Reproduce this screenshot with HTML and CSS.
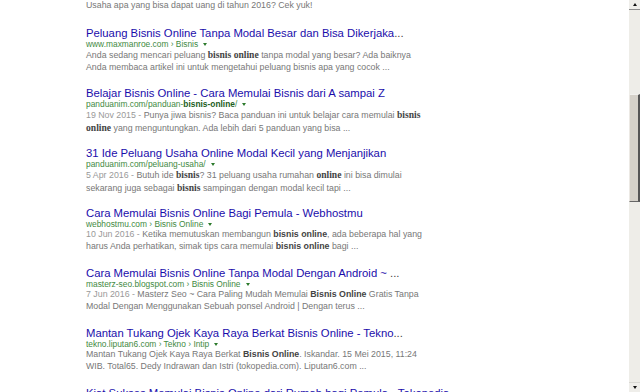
FILE: index.html
```html
<!DOCTYPE html>
<html lang="id">
<head>
	<meta charset="UTF-8">
	<meta name="viewport" content="width=device-width, initial-scale=1.0">
	<title>bisnis online - Penelusuran</title>
	<link rel="stylesheet" href="styles.css">
</head>
<body>
	<div class="page">
		<div class="results">
			<div class="st tail">Usaha apa yang bisa dapat uang di tahun 2016? Cek yuk!</div>

			<div class="g">
				<h3 class="r"><a href="#">Peluang Bisnis Online Tanpa Modal Besar dan Bisa Dikerjaka<span class="dots">...</span></a></h3>
				<div class="url"><cite>www.maxmanroe.com › Bisnis</cite><span class="arrow"></span></div>
				<div class="st serif">Anda sedang mencari peluang <b>bisnis online</b> tanpa modal yang besar? Ada baiknya<br>Anda membaca artikel ini untuk mengetahui peluang bisnis apa yang cocok ...</div>
			</div>

			<div class="g">
				<h3 class="r"><a href="#">Belajar Bisnis Online - Cara Memulai Bisnis dari A sampai Z</a></h3>
				<div class="url"><cite>panduanim.com/panduan-<b>bisnis-online</b>/</cite><span class="arrow"></span></div>
				<div class="st serif"><span class="f">19 Nov 2015 - </span>Punya jiwa bisnis? Baca panduan ini untuk belajar cara memulai <b>bisnis</b><br><b>online</b> yang menguntungkan. Ada lebih dari 5 panduan yang bisa ...</div>
			</div>

			<div class="g">
				<h3 class="r"><a href="#">31 Ide Peluang Usaha Online Modal Kecil yang Menjanjikan</a></h3>
				<div class="url"><cite>panduanim.com/peluang-usaha/</cite><span class="arrow"></span></div>
				<div class="st serif"><span class="f">5 Apr 2016 - </span>Butuh ide <b>bisnis</b>? 31 peluang usaha rumahan <b>online</b> ini bisa dimulai<br>sekarang juga sebagai <b>bisnis</b> sampingan dengan modal kecil tapi ...</div>
			</div>

			<div class="g">
				<h3 class="r"><a href="#">Cara Memulai Bisnis Online Bagi Pemula - Webhostmu</a></h3>
				<div class="url"><cite>webhostmu.com › Bisnis Online</cite><span class="arrow"></span></div>
				<div class="st"><span class="f">10 Jun 2016 - </span>Ketika memutuskan membangun <b>bisnis online</b>, ada beberapa hal yang<br>harus Anda perhatikan, simak tips cara memulai <b>bisnis online</b> bagi ...</div>
			</div>

			<div class="g">
				<h3 class="r"><a href="#">Cara Memulai Bisnis Online Tanpa Modal Dengan Android ~ <span class="dots">...</span></a></h3>
				<div class="url"><cite>masterz-seo.blogspot.com › Bisnis Online</cite><span class="arrow"></span></div>
				<div class="st"><span class="f">7 Jun 2016 - </span>Masterz Seo ~ Cara Paling Mudah Memulai <b>Bisnis Online</b> Gratis Tanpa<br>Modal Dengan Menggunakan Sebuah ponsel Android | Dengan terus ...</div>
			</div>

			<div class="g">
				<h3 class="r"><a href="#">Mantan Tukang Ojek Kaya Raya Berkat Bisnis Online - Tekno<span class="dots">...</span></a></h3>
				<div class="url"><cite>tekno.liputan6.com › Tekno › Intip</cite><span class="arrow"></span></div>
				<div class="st">Mantan Tukang Ojek Kaya Raya Berkat <b>Bisnis Online</b>. Iskandar. 15 Mei 2015, 11:24<br>WIB. Total65. Dedy Indrawan dan Istri (tokopedia.com). Liputan6.com ...</div>
			</div>

			<div class="g">
				<h3 class="r"><a href="#">Kiat Sukses Memulai Bisnis Online dari Rumah bagi Pemula - Tokopedia</a></h3>
			</div>
		</div>

		<div class="scrollbar">
			<div class="sb-btn up"><span></span></div>
			<div class="sb-track">
				<div class="sb-thumb"></div>
			</div>
			<div class="sb-btn down"><span></span></div>
		</div>
	</div>
</body>
</html>
```

FILE: styles.css
```css
body {
	margin: 0;
	background-color: #fff;
	font-family: "Liberation Sans", Arial, sans-serif;
}
.page {
	display: flex;
	height: 392px;
	overflow: hidden;
}
.results {
	flex: 1;
	padding-left: 86px;
	overflow: hidden;
}

/* one search result */
.g {
	margin-bottom: 15px;
}
.r {
	margin: 0;
	height: 12px;
	font-size: 11.3px;
	font-weight: normal;
	line-height: 12px;
	white-space: nowrap;
}
.r a {
	color: #1a0dab;
	text-decoration: none;
}
.r .dots { color: #444; }

.url {
	height: 10px;
	line-height: 10px;
	font-size: 8.4px;
	white-space: nowrap;
}
.url cite {
	font-style: normal;
	color: #3f8a3f;
}
.url cite b { color: #1d5e1d; }
.arrow {
	display: inline-block;
	margin-left: 5px;
	vertical-align: 1px;
	border-left: 2.5px solid transparent;
	border-right: 2.5px solid transparent;
	border-top: 3px solid #2c7a2c;
}

.st {
	height: 23px;
	font-size: 8.8px;
	line-height: 11.5px;
	color: #777;
	white-space: nowrap;
}
.st b {
	color: #444;
}
.st.serif b {
	font-family: "Liberation Serif", "Times New Roman", serif;
	font-size: 9.6px;
}
.st .f { color: #999; }
.tail {
	height: 10px;
	line-height: 10px;
	margin-bottom: 17px;
}

/* old-style window scrollbar */
.scrollbar {
	width: 11px;
	display: flex;
	flex-direction: column;
	background-color: #eeede8;
}
.sb-btn {
	height: 9px;
	display: flex;
	align-items: center;
	justify-content: center;
	background-color: #efeeea;
}
.sb-btn.up { border-bottom: 1px solid #8d8d8d; }
.sb-btn.down { border-top: 1px solid #d9d8d3; }
.sb-btn span {
	width: 0;
	height: 0;
	border-left: 2.5px solid transparent;
	border-right: 2.5px solid transparent;
}
.sb-btn.up span { border-bottom: 3px solid #111; }
.sb-btn.down span { border-top: 3px solid #111; }
.sb-track {
	flex: 1;
	padding-top: 84px;
}
.sb-thumb {
	height: 106px;
	background-color: #d5d1c9;
	border-top: 1px solid #f2f1ee;
	border-left: 1px solid #ece9e4;
	border-right: 2px solid #555;
	border-bottom: 1px solid #666;
}
```
